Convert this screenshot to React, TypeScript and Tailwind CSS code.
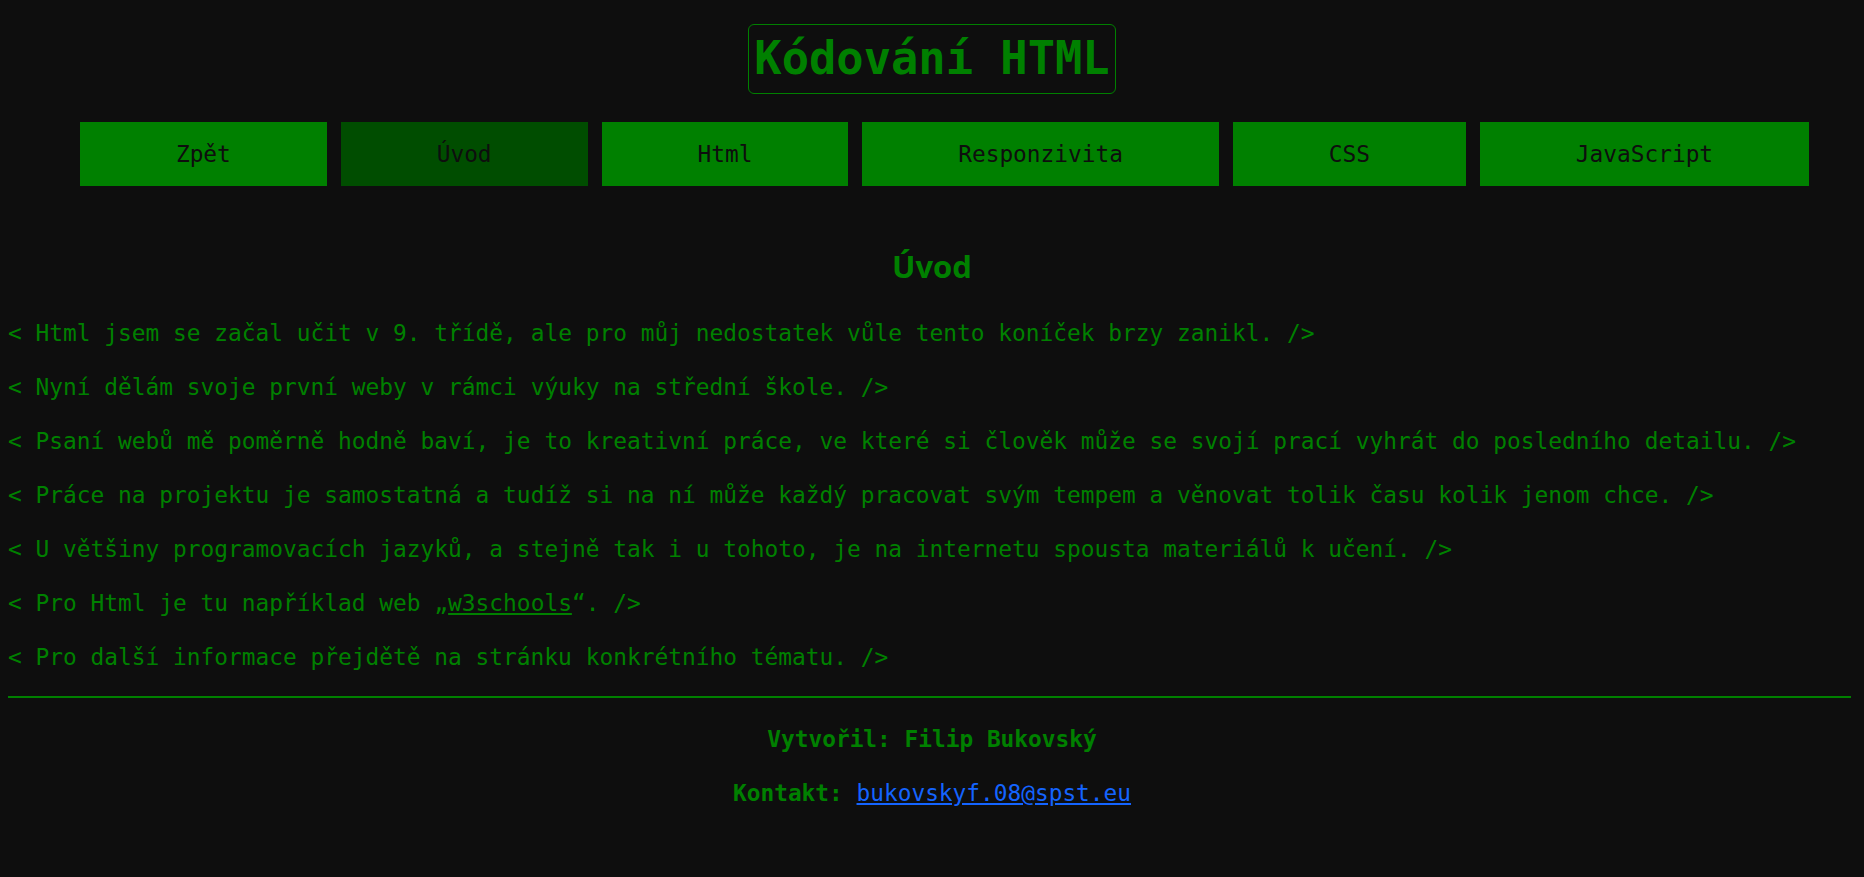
const lines = [
  "Html jsem se začal učit v 9. třídě, ale pro můj nedostatek vůle tento koníček brzy zanikl.",
  "Nyní dělám svoje první weby v rámci výuky na střední škole.",
  "Psaní webů mě poměrně hodně baví, je to kreativní práce, ve které si člověk může se svojí prací vyhrát do posledního detailu.",
  "Práce na projektu je samostatná a tudíž si na ní může každý pracovat svým tempem a věnovat tolik času kolik jenom chce.",
  "U většiny programovacích jazyků, a stejně tak i u tohoto, je na internetu spousta materiálů k učení.",
];

const nav = ["Zpět", "Úvod", "Html", "Responzivita", "CSS", "JavaScript"];

const mono = "font-['DejaVu_Sans_Mono',monospace]";

export default function App() {
  return (
    <div className={`min-h-[877px] bg-[#0e0e0e] px-2 text-[#008000] ${mono}`}>
      <header className="flex justify-center pt-[24px]">
        <h1 className="flex h-[70px] items-center rounded-[6px] border border-[#008000] px-[5px] text-[45.4px] font-bold">
          Kódování HTML
        </h1>
      </header>

      <nav className="mt-[28px] flex gap-[14px] pl-[72px] pr-[47px]">
        {nav.map((item) => (
          <a
            key={item}
            className={`flex h-[64px] flex-auto items-center justify-center text-[22.8px] text-[#0e0e0e] ${
              item === "Úvod" ? "bg-[#004d00]" : "bg-[#008000]"
            }`}
          >
            {item}
          </a>
        ))}
      </nav>

      <h2 className="mt-[60px] flex h-[40px] items-center justify-center font-['Open_Sans',sans-serif] text-[31px] font-bold">
        Úvod
      </h2>

      <main className="mt-[20px] text-[22.85px]">
        {lines.map((t) => (
          <p key={t} className="h-[54px] leading-[54px] whitespace-nowrap">
            &lt; {t} /&gt;
          </p>
        ))}
        <p className="h-[54px] leading-[54px]">
          &lt; Pro Html je tu například web „<a className="underline">w3schools</a>“. /&gt;
        </p>
        <p className="h-[54px] leading-[54px]">
          &lt; Pro další informace přejdětě na stránku konkrétního tématu. /&gt;
        </p>
      </main>

      <hr className="mt-[12px] mr-[5px] border-t-2 border-[#008000]" />

      <footer className="mt-[14px] text-center text-[22.8px] font-bold">
        <p className="h-[54px] leading-[54px]">Vytvořil: Filip Bukovský</p>
        <p className="h-[54px] leading-[54px]">
          Kontakt: <a className="font-normal text-[#1464ff] underline">bukovskyf.08@spst.eu</a>
        </p>
      </footer>
    </div>
  );
}
